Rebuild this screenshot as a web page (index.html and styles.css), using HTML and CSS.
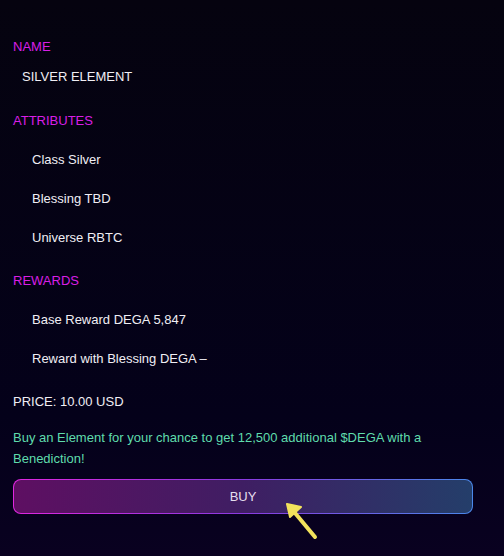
FILE: index.html
```html
<!DOCTYPE html>
<html lang="en">
<head>
    <meta charset="UTF-8">
    <meta name="viewport" content="width=device-width, initial-scale=1.0">
    <title>Silver Element</title>
    <link rel="stylesheet" href="styles.css">
</head>
<body>
    <div class="panel">
        <h3 class="label">NAME</h3>
        <p class="name">SILVER ELEMENT</p>

        <h3 class="label">ATTRIBUTES</h3>
        <ul class="list">
            <li>Class Silver</li>
            <li>Blessing TBD</li>
            <li>Universe RBTC</li>
        </ul>

        <h3 class="label">REWARDS</h3>
        <ul class="list">
            <li>Base Reward DEGA 5,847</li>
            <li>Reward with Blessing DEGA –</li>
        </ul>

        <p class="price">PRICE: 10.00 USD</p>
        <p class="promo">Buy an Element for your chance to get 12,500 additional $DEGA with a Benediction!</p>

        <div class="buy-wrap">
            <button class="buy">BUY</button>
            <svg class="pointer" width="44" height="46" viewBox="0 0 44 46">
                <line x1="15" y1="16" x2="35" y2="40" stroke="#f2e35c" stroke-width="4" stroke-linecap="round"/>
                <polygon points="7,7 21,10 10,20" fill="#f2e35c" stroke="#f2e35c" stroke-width="2" stroke-linejoin="round"/>
            </svg>
        </div>
    </div>
</body>
</html>
```

FILE: styles.css
```css
html, body {
    margin: 0;
    min-height: 100%;
}
body {
    font-family: "Liberation Sans", Arial, sans-serif;
    font-size: 13px;
    line-height: 20px;
    color: #f0eef4;
    background: linear-gradient(180deg, #05030f 0%, #04011a 75%, #090120 100%);
    min-height: 556px;
}
.panel {
    padding: 37px 31px 0 13px;
}
.label {
    margin: 0;
    font-size: 13px;
    font-weight: normal;
    color: #d81fe6;
}
.name {
    margin: 10px 0 24px 9px;
}
.list {
    list-style: none;
    margin: 19px 0 23px 0;
    padding: 0 0 0 19px;
}
.list li {
    margin-bottom: 19px;
}
.list li:last-child {
    margin-bottom: 0;
}
.price {
    margin: 0 0 15px 0;
}
.promo {
    margin: 0 0 10px 0;
    line-height: 21px;
    color: #5fdcac;
}
.buy-wrap {
    position: relative;
}
.buy {
    display: block;
    width: 100%;
    height: 35px;
    border: 1px solid transparent;
    border-radius: 8px;
    background: linear-gradient(90deg, #5e0f62, #3f1e63 50%, #243e6a) padding-box,
                linear-gradient(90deg, #e026e0, #8a3ae0 50%, #4a88ea) border-box;
    color: #e6deee;
    font-family: "Liberation Sans", Arial, sans-serif;
    font-size: 13px;
    cursor: pointer;
}
.pointer {
    position: absolute;
    left: 267px;
    top: 18px;
}
```
